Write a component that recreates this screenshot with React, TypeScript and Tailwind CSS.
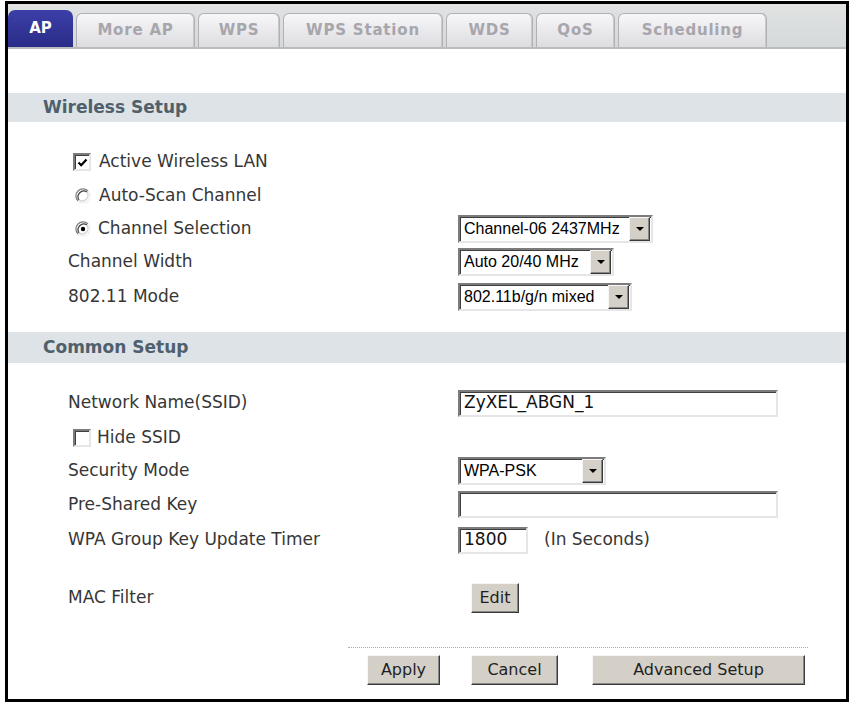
import type { ReactNode } from 'react'

const TABS = [
  { label: 'AP', width: 'w-[65px]' },
  { label: 'More AP', width: 'w-[119px]' },
  { label: 'WPS', width: 'w-[82px]' },
  { label: 'WPS Station', width: 'w-[160px]' },
  { label: 'WDS', width: 'w-[87px]' },
  { label: 'QoS', width: 'w-[79px]' },
  { label: 'Scheduling', width: 'w-[149px]' },
]

// classic sunken / raised 3D edges
const SUNKEN =
  'border-2 border-t-[#7c7c7c] border-l-[#7c7c7c] border-b-[#e6e6e6] border-r-[#e6e6e6] shadow-[inset_1px_1px_0_#3f3f3f] bg-white'
const RAISED =
  'border border-t-[#f6f6f6] border-l-[#f6f6f6] border-b-[#3a3a3a] border-r-[#3a3a3a] shadow-[inset_-1px_-1px_0_#888888] bg-[#d4d0c8]'

function TabBar() {
  return (
    <div className="flex h-[45px] shrink-0 items-end gap-[3px] border-b-2 border-[#b9bcbd] bg-gradient-to-b from-[#e1e3e3] to-[#d5d9d9]">
      {TABS.map((t, i) =>
        i === 0 ? (
          <div
            key={t.label}
            className={`${t.width} flex h-[37px] items-center justify-center rounded-t-[7px] bg-gradient-to-b from-[#3c3fa6] to-[#2a2c89] text-[15px] font-bold text-white`}
          >
            {t.label}
          </div>
        ) : (
          <div
            key={t.label}
            className={`${t.width} flex h-[34px] items-center justify-center rounded-t-[6px] border border-b-0 border-[#b1b0b5] bg-gradient-to-b from-[#f7f6f8] to-[#dddce0] text-[15px] font-bold tracking-[0.8px] text-[#a7a6ac] shadow-[inset_-1px_0_0_#c9c8cc]`}
          >
            {t.label}
          </div>
        ),
      )}
    </div>
  )
}

function Band({ title, h }: { title: string; h: string }) {
  return (
    <div className={`flex ${h} shrink-0 items-center bg-[#dde3e6] pl-[35px] text-[17px] font-bold text-[#4f5f6c]`}>
      {title}
    </div>
  )
}

function Row({ h, label, children }: { h: string; label: ReactNode; children?: ReactNode }) {
  return (
    <div className={`flex ${h} shrink-0 items-center pl-[60px]`}>
      <div className="w-[390px] shrink-0">{label}</div>
      {children}
    </div>
  )
}

function Check({ on }: { on?: boolean }) {
  return (
    <span className={`flex h-[18px] w-[18px] shrink-0 items-center justify-center ${SUNKEN}`}>
      {on && (
        <svg width="11" height="11" viewBox="0 0 11 11">
          <path d="M1.5 5.5 L4.2 8.2 L9.5 2.5" fill="none" stroke="#000" strokeWidth="2.2" />
        </svg>
      )}
    </span>
  )
}

function Radio({ on }: { on?: boolean }) {
  return (
    <svg width="16" height="16" viewBox="0 0 16 16" className="shrink-0">
      <circle cx="8" cy="8" r="7" fill="#fff" />
      <path d="M3 13 A7 7 0 0 1 13 3" fill="none" stroke="#808080" strokeWidth="1.3" />
      <path d="M4.1 11.9 A5.6 5.6 0 0 1 11.9 4.1" fill="none" stroke="#404040" strokeWidth="1.2" />
      <path d="M13 3 A7 7 0 0 1 3 13" fill="none" stroke="#f0f0f0" strokeWidth="1.3" />
      <path d="M11.9 4.1 A5.6 5.6 0 0 1 4.1 11.9" fill="none" stroke="#d4d0c8" strokeWidth="1.2" />
      {on && <circle cx="8" cy="8" r="2.2" fill="#000" />}
    </svg>
  )
}

function Select({ value, w }: { value: string; w: string }) {
  return (
    <div className={`flex h-[28px] ${w} items-stretch ${SUNKEN}`}>
      <span className="flex-1 overflow-hidden whitespace-nowrap pl-[4px] font-['Liberation_Sans',Arial,sans-serif] text-[16px] leading-[24px] text-black">
        {value}
      </span>
      <span className={`mr-[1px] flex w-[21px] items-center justify-center ${RAISED}`}>
        <svg width="8" height="4" viewBox="0 0 8 4">
          <path d="M0 0 H8 L4 4 Z" fill="#000" />
        </svg>
      </span>
    </div>
  )
}

function TextBox({ value, w }: { value?: string; w: string }) {
  return (
    <div className={`flex h-[27px] ${w} items-center pl-[4px] ${SUNKEN} whitespace-nowrap text-[17px] text-[#111]`}>
      {value}
    </div>
  )
}

function Btn({ w, children }: { w: string; children: ReactNode }) {
  return (
    <button
      type="button"
      className={`flex h-[30px] ${w} items-center justify-center ${RAISED} text-[16px] text-[#1f1f1f]`}
    >
      {children}
    </button>
  )
}

export default function App() {
  return (
    <div className="h-[704px] w-[851px] bg-white pl-[5px] pt-[1px] font-['DejaVu_Sans',Verdana,sans-serif] text-[17px] text-[#363636]">
      <div className="flex h-[701px] w-[844px] flex-col border-[3px] border-black">
        <TabBar />

        <div className="mt-[44px]">
          <Band title="Wireless Setup" h="h-[29px]" />
        </div>

        <div className="flex flex-col pt-[23px]">
          <Row
            h="h-[34px]"
            label={
              <div className="flex items-center gap-[8px] pl-[5px]">
                <Check on />
                Active Wireless LAN
              </div>
            }
          />
          <Row
            h="h-[34px]"
            label={
              <div className="flex items-center gap-[8px] pl-[7px]">
                <Radio />
                Auto-Scan Channel
              </div>
            }
          />
          <Row
            h="h-[32px]"
            label={
              <div className="flex items-center gap-[7px] pl-[7px]">
                <Radio on />
                Channel Selection
              </div>
            }
          >
            <Select value="Channel-06 2437MHz" w="w-[195px]" />
          </Row>
          <Row h="h-[34px]" label="Channel Width">
            <Select value="Auto 20/40 MHz" w="w-[156px]" />
          </Row>
          <Row h="h-[36px]" label="802.11 Mode">
            <Select value="802.11b/g/n mixed" w="w-[174px]" />
          </Row>
        </div>

        <div className="mt-[17px]">
          <Band title="Common Setup" h="h-[31px]" />
        </div>

        <div className="flex flex-col pt-[23px]">
          <Row h="h-[34px]" label="Network Name(SSID)">
            <TextBox value="ZyXEL_ABGN_1" w="w-[320px]" />
          </Row>
          <Row
            h="h-[35px]"
            label={
              <div className="flex items-center gap-[6px] pl-[5px]">
                <Check />
                Hide SSID
              </div>
            }
          />
          <Row h="h-[32px]" label="Security Mode">
            <Select value="WPA-PSK" w="w-[148px]" />
          </Row>
          <Row h="h-[35px]" label="Pre-Shared Key">
            <TextBox w="w-[320px]" />
          </Row>
          <Row h="h-[36px]" label="WPA Group Key Update Timer">
            <TextBox value="1800" w="w-[70px]" />
            <span className="ml-[16px]">(In Seconds)</span>
          </Row>
          <div className="mt-[22px]">
            <Row h="h-[36px]" label="MAC Filter">
              <div className="ml-[13px]">
                <Btn w="w-[48px]">Edit</Btn>
              </div>
            </Row>
          </div>
        </div>

        <div className="ml-[340px] mt-[31px] w-[460px] border-t border-dotted border-[#a9a9a9]" />

        <div className="ml-[359px] mt-[7px] flex">
          <Btn w="w-[73px]">Apply</Btn>
          <div className="ml-[31px]">
            <Btn w="w-[87px]">Cancel</Btn>
          </div>
          <div className="ml-[34px]">
            <Btn w="w-[213px]">Advanced Setup</Btn>
          </div>
        </div>
      </div>
    </div>
  )
}
